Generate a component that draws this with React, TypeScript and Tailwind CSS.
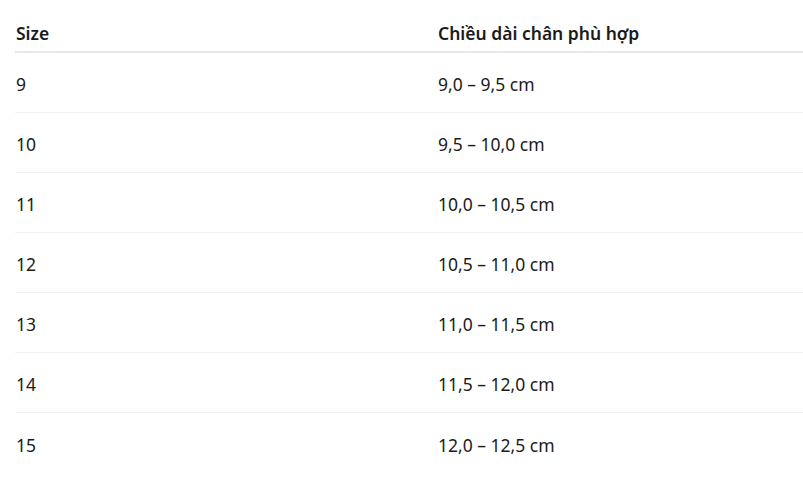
const rows = [
    ['9', '9,0 – 9,5 cm'],
    ['10', '9,5 – 10,0 cm'],
    ['11', '10,0 – 10,5 cm'],
    ['12', '10,5 – 11,0 cm'],
    ['13', '11,0 – 11,5 cm'],
    ['14', '11,5 – 12,0 cm'],
    ['15', '12,0 – 12,5 cm'],
]

export default function App() {
    return (
        <div className="min-h-[480px] bg-white pl-[15px] font-['Noto_Sans','Open_Sans',sans-serif] text-[17.5px] text-[#1b1b1b]">
            <div className="pt-[13px]">
                <div className="grid h-[40px] grid-cols-[422px_1fr] items-center border-b-2 border-[#e8e8e8] pt-[3px] pl-px font-semibold">
                    <div>Size</div>
                    <div>Chiều dài chân phù hợp</div>
                </div>
                {rows.map(([size, len]) => (
                    <div
                        key={size}
                        className="grid h-[60px] grid-cols-[422px_1fr] items-center border-b border-[#f2f2f2] pl-px pt-[4px] last:border-b-0"
                    >
                        <div>{size}</div>
                        <div>{len}</div>
                    </div>
                ))}
            </div>
        </div>
    )
}
